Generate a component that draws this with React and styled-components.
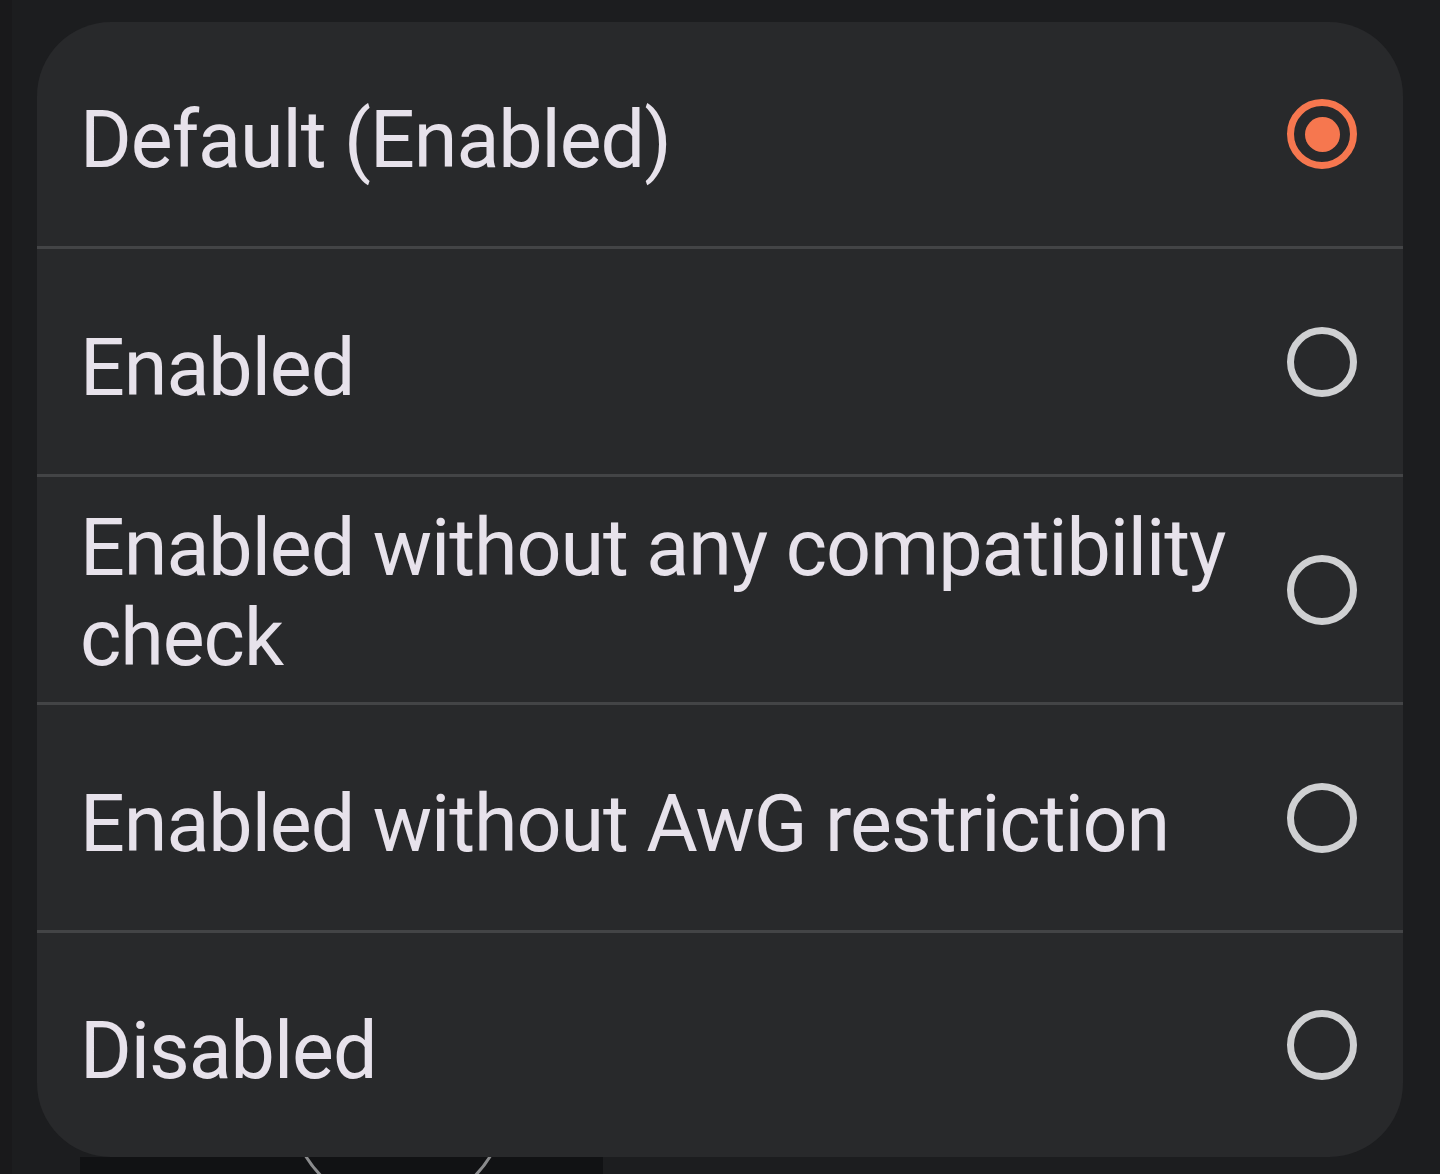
import React from "react";
import styled, { createGlobalStyle } from "styled-components";

const Global = createGlobalStyle`
  html, body { margin: 0; padding: 0; background: #1b1c1e; }
  body { font-family: Roboto, "Noto Sans", sans-serif; overflow: hidden; }
`;

const Page = styled.div`
  width: 1440px;
  height: 1174px;
  display: flex;
  flex-direction: column;
  background: linear-gradient(to right, #19191b 0, #19191b 12px, #1c1d1f 12px);
  padding-top: 22px;
  box-sizing: border-box;
`;

const Sheet = styled.div`
  margin: 0 37px;
  height: 1135px;
  background: #28292b;
  border-radius: 74px;
  display: flex;
  flex-direction: column;
  overflow: hidden;
`;

const Option = styled.label`
  display: flex;
  align-items: center;
  justify-content: space-between;
  gap: 40px;
  height: ${(p) => p.$h}px;
  padding: 0 46px 0 43px;
  box-sizing: border-box;
  border-top: ${(p) => (p.$first ? "none" : "3px solid #434446")};
  cursor: pointer;
`;

const Label = styled.span`
  font-size: 79px;
  line-height: 90px;
  color: #e7e2eb;
  letter-spacing: -1.05px;
  max-width: 1170px;
  padding-top: ${(p) => (p.$multi ? 6 : 12)}px;
`;

const Radio = styled.span`
  flex: none;
  width: 70px;
  height: 70px;
  border-radius: 50%;
  box-sizing: border-box;
  border: 7px solid ${(p) => (p.$on ? "#f6774f" : "#cfd0d2")};
  display: flex;
  align-items: center;
  justify-content: center;
  &::after {
    content: "";
    width: 35px;
    height: 35px;
    border-radius: 50%;
    background: #f6774f;
    display: ${(p) => (p.$on ? "block" : "none")};
  }
`;

const Under = styled.div`
  margin-left: 80px;
  width: 523px;
  height: 17px;
  background: #111214;
  display: flex;
`;

const options = [
  { text: "Default (Enabled)", on: true, h: 224 },
  { text: "Enabled", h: 228 },
  { text: "Enabled without any compatibility check", h: 228, multi: true },
  { text: "Enabled without AwG restriction", h: 228 },
  { text: "Disabled", h: 227 },
];

export default function App() {
  return (
    <>
      <Global />
      <Page>
        <Sheet>
          {options.map((o, i) => (
            <Option key={o.text} $first={i === 0} $h={o.h}>
              <Label $multi={o.multi}>{o.text}</Label>
              <Radio $on={o.on} />
            </Option>
          ))}
        </Sheet>
        <Under>
          <svg width="523" height="17" viewBox="0 0 523 17">
            <circle cx="318" cy="-57" r="108" fill="none" stroke="#8a8b8d" strokeWidth="3" />
          </svg>
        </Under>
      </Page>
    </>
  );
}
